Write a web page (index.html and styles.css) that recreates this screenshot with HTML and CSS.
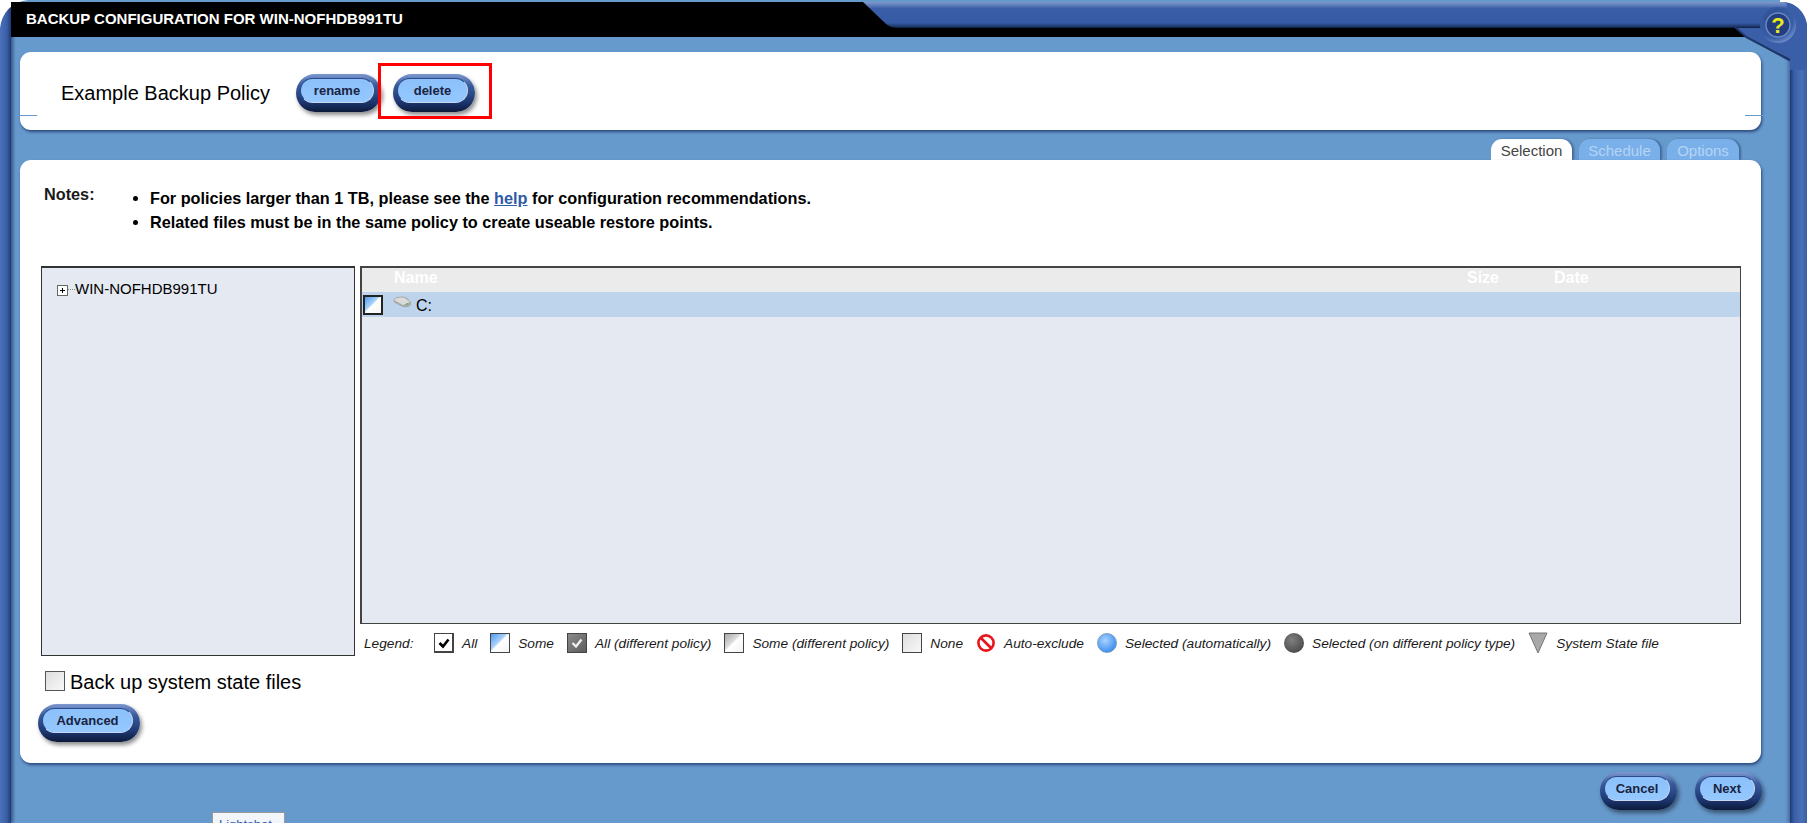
FILE: index.html
```html
<!DOCTYPE html>
<html lang="en">
<head>
    <meta charset="UTF-8">
    <title>Backup Configuration</title>
    <link rel="stylesheet" href="styles.css">
</head>
<body>

    <div class="window">
        <div class="frame-left"></div>

        <div class="main">
            <div class="titlebar">BACKUP CONFIGURATION FOR WIN-NOFHDB991TU</div>

            <!-- Policy name -->
            <div class="panel policy-panel">
                <span class="policy-name">Example Backup Policy</span>
                <a class="pill pill-rename"><span>rename</span></a>
                <a class="pill pill-delete"><span>delete</span></a>
                <div class="highlight"></div>
            </div>

            <div class="tabs">
                <div class="tab tab-active">Selection</div>
                <div class="tab tab-schedule">Schedule</div>
                <div class="tab tab-options">Options</div>
            </div>

            <!-- Selection tab -->
            <div class="panel selection-panel">
                <div class="notes">
                    <div class="notes-label">Notes:</div>
                    <ul class="notes-list">
                        <li>For policies larger than 1 TB, please see the <a class="help-link">help</a> for configuration recommendations.</li>
                        <li>Related files must be in the same policy to create useable restore points.</li>
                    </ul>
                </div>

                <div class="browser">
                    <div class="tree">
                        <span class="tree-plus"></span><span class="tree-dots"></span><span>WIN-NOFHDB991TU</span>
                    </div>

                    <div class="file-column">
                        <div class="file-grid">
                            <div class="grid-head">
                                <span class="col-name">Name</span>
                                <span class="col-size">Size</span>
                                <span class="col-date">Date</span>
                            </div>
                            <div class="grid-row">
                                <span class="check check-some check-row"></span>
                                <svg class="drive" width="20" height="15" viewBox="0 0 20 15">
                                    <path d="M2 4 C5 1 12 1 15 3 L19 7 V9 C19 11 15 13 11 12 L3 8 C1 7 1 5 2 4 Z" fill="#a9a9a9"/>
                                    <path d="M2 5 C5 2 12 2 14 4 L18 7 L11 10 Z" fill="#dadada"/>
                                    <circle cx="15" cy="9" r="0.9" fill="#5fb75f"/>
                                </svg>
                                <span class="drive-label">C:</span>
                            </div>
                        </div>

                        <div class="legend">
                            <span class="legend-title">Legend:</span>
                            <span class="legend-item item-all"><span class="check check-all"><svg width="14" height="14" viewBox="0 0 14 14"><path d="M2.5 7 L6 10.5 L11.5 3.5" fill="none" stroke="#000" stroke-width="2.6"/></svg></span>All</span>
                            <span class="legend-item item-some"><span class="check check-some"></span>Some</span>
                            <span class="legend-item item-alldiff"><span class="check check-alldiff"><svg width="14" height="14" viewBox="0 0 14 14"><path d="M2.5 7 L6 10.5 L11.5 3.5" fill="none" stroke="#eee" stroke-width="2.4"/></svg></span>All (different policy)</span>
                            <span class="legend-item item-somediff"><span class="check check-somediff"></span>Some (different policy)</span>
                            <span class="legend-item item-none"><span class="check check-none"></span>None</span>
                            <span class="legend-item item-auto">
                                <svg class="legend-icon" width="20" height="20" viewBox="0 0 20 20"><circle cx="10" cy="10" r="7.6" fill="#fff" stroke="#e8141c" stroke-width="2.6"/><path d="M5 5 L15 15" stroke="#e8141c" stroke-width="2.6"/></svg>
                                Auto-exclude</span>
                            <span class="legend-item item-selected"><span class="dot dot-blue"></span>Selected (automatically)</span>
                            <span class="legend-item item-other"><span class="dot dot-grey"></span>Selected (on different policy type)</span>
                            <span class="legend-item">
                                <svg class="legend-icon" width="20" height="22" viewBox="0 0 20 22"><path d="M1 1 H19 L10 21 Z" fill="#a8a8a8" stroke="#777" stroke-width="1"/></svg>
                                System State file</span>
                        </div>
                    </div>
                </div>

                <div class="system-state">
                    <span class="check check-none check-large"></span>
                    <span>Back up system state files</span>
                </div>

                <a class="pill pill-advanced"><span>Advanced</span></a>
            </div>

            <div class="footer">
                <a class="pill pill-cancel"><span>Cancel</span></a>
                <a class="pill pill-next"><span>Next</span></a>
            </div>
        </div>

        <div class="frame-right"></div>
    </div>

    <!-- Frame corners and the band across the top right -->
    <svg class="frame-top" width="1807" height="70" viewBox="0 0 1807 70">
        <defs>
            <linearGradient id="bandFill" x1="0" y1="0" x2="0" y2="1">
                <stop offset="0" stop-color="#8198c9"/>
                <stop offset="0.12" stop-color="#5f7fbb"/>
                <stop offset="0.25" stop-color="#3a5fa8"/>
                <stop offset="0.8" stop-color="#365ba4"/>
                <stop offset="0.95" stop-color="#1d3567"/>
                <stop offset="1" stop-color="#0c1a38"/>
            </linearGradient>
            <radialGradient id="helpRing" cx="0.4" cy="0.35" r="0.75">
                <stop offset="0" stop-color="#2a4a8c"/>
                <stop offset="0.7" stop-color="#3a5fa8"/>
                <stop offset="1" stop-color="#8aa4d8"/>
            </radialGradient>
        </defs>
        <path d="M0 0 H28 C12 2 2 12 0 28 Z" fill="#fff"/>
        <path d="M11 2 H28 C18 4 12 12 11 20 Z" fill="#000"/>
        <path d="M1780 0 H1807 V24 C1805 12 1796 3 1780 2 Z" fill="#fff"/>
        <path d="M1735 28 L1746 37 L1790 62 L1790 70 L1807 70 V26 C1805 12 1796 2 1782 2 Z" fill="#3a5fa8"/>
        <path d="M863 2 H1782 C1788 2 1790 4 1780 28 H900 C892 28 888 26 884 22 Z" fill="url(#bandFill)"/>
        <path d="M1735 27 L1746 37 L1790 60" fill="none" stroke="#1d3567" stroke-width="2"/>
        <circle cx="1778" cy="25" r="18" fill="url(#helpRing)"/>
        <circle cx="1778" cy="25" r="12" fill="#223e80" stroke="#6a88c2" stroke-width="1.5"/>
        <text x="1778" y="33" text-anchor="middle" class="help-mark">?</text>
    </svg>

    <div class="tooltip">Lightshot</div>

</body>
</html>
```

FILE: styles.css
```css
:root {
    --frame-blue: #3a5fa8;
    --page-blue: #6699cc;
    --pane-color: #e5e9f2;
    --pill-color: #90c4fb;
    --text-color: #000000;
}

html, body {
    margin: 0;
    height: 823px;
    overflow: hidden;
}

body {
    position: relative;
    background: var(--page-blue);
    font-family: "Liberation Sans", Arial, sans-serif;
    color: var(--text-color);
}

.window {
    display: flex;
    height: 823px;
}

/* Frame */
.frame-left {
    width: 11px;
    flex: none;
    background: linear-gradient(90deg, #4a72b8 0%, #3a5fa8 60%, #1f3a75 100%);
    box-shadow: 2px 0 3px rgba(20, 40, 80, 0.6);
}

.frame-right {
    width: 17px;
    flex: none;
    background: linear-gradient(90deg, #1f3a75 0%, #3a5fa8 25%, #4a70b6 70%, #3a5fa8 100%);
    box-shadow: -2px 0 3px rgba(20, 40, 80, 0.4);
}

.frame-top {
    position: absolute;
    left: 0;
    top: 0;
}

.help-mark {
    font-family: "Liberation Sans", Arial, sans-serif;
    font-size: 22px;
    font-weight: 700;
    fill: #e8e81c;
}

.main {
    flex: 1;
    min-width: 0;
    display: flex;
    flex-direction: column;
}

.titlebar {
    height: 35px;
    margin-top: 2px;
    padding-left: 15px;
    background: #000000;
    color: #ffffff;
    font-size: 15px;
    font-weight: 700;
    line-height: 33px;
}

/* Panels */
.panel {
    background: #ffffff;
    margin: 0 29px 0 9px;
    border-radius: 11px;
    box-shadow: 1px 2px 3px #2c4a7c;
    position: relative;
}

.policy-panel {
    height: 78px;
    margin-top: 15px;
    display: flex;
    align-items: center;
    box-sizing: border-box;
    padding: 4px 0 0 41px;
}

.policy-panel::before,
.policy-panel::after {
    content: "";
    position: absolute;
    top: 63px;
    height: 1px;
    background: var(--page-blue);
}

.policy-panel::before {
    left: 0;
    width: 17px;
}

.policy-panel::after {
    right: -5px;
    width: 21px;
}

.policy-name {
    font-size: 20px;
    margin-right: 26px;
}

/* Pill buttons */
.pill {
    display: inline-block;
    box-sizing: border-box;
    height: 38px;
    padding: 4px 7px 9px 4px;
    border-radius: 19px;
    background: linear-gradient(180deg, #7d98d0 0%, #3a5c9c 30%, #1f3a75 70%, #0c1a3c 100%);
    box-shadow: 2px 3px 4px rgba(0, 0, 0, 0.45);
}

.pill span {
    display: flex;
    align-items: center;
    justify-content: center;
    height: 100%;
    box-sizing: border-box;
    border-radius: 14px;
    background: linear-gradient(180deg, #8cc0fa 0%, #94c8ff 100%);
    border: 1px solid #c8d8f0;
    border-top-color: #2b4b8c;
    border-left-color: #2b4b8c;
    color: #1a2340;
    font-size: 13px;
    font-weight: 700;
}

.pill-rename {
    width: 85px;
}

.pill-delete {
    width: 82px;
    margin-left: 12px;
}

.pill-advanced {
    width: 102px;
}

.pill-cancel {
    width: 77px;
}

.pill-next {
    width: 67px;
    margin-left: 18px;
}

.highlight {
    position: absolute;
    left: 358px;
    top: 11px;
    width: 114px;
    height: 56px;
    box-sizing: border-box;
    border: 3px solid #ff0000;
}

/* Tabs */
.tabs {
    display: flex;
    justify-content: flex-end;
    gap: 7px;
    margin: 9px 51px 0 0;
    height: 21px;
}

.tab {
    width: 81px;
    height: 21px;
    text-align: center;
    border-radius: 11px 11px 0 0;
    background: #7ab0ea;
    color: #b5d4f5;
    font-size: 15px;
    line-height: 24px;
    box-shadow: 2px 0 2px rgba(30, 60, 110, 0.5);
}

.tab-options {
    width: 72px;
}

.tab-active {
    background: #ffffff;
    color: #444444;
}

/* Selection panel */
.selection-panel {
    height: 603px;
    box-sizing: border-box;
    padding: 0 20px 0 21px;
}

.notes {
    display: flex;
    height: 106px;
    box-sizing: border-box;
    padding: 25px 0 0 3px;
    font-size: 16.25px;
    font-weight: 700;
}

.notes-label {
    width: 70px;
    color: #1a1a1a;
}

.notes-list {
    margin: 3px 0 0;
    padding: 0 0 0 36px;
}

.notes-list li {
    height: 24px;
    line-height: 20px;
}

.help-link {
    color: #2f5aa8;
    text-decoration: underline;
}

.browser {
    display: flex;
    gap: 5px;
    height: 390px;
}

.tree {
    width: 314px;
    height: 390px;
    flex: none;
    box-sizing: border-box;
    padding: 12px 0 0 15px;
    display: flex;
    align-items: flex-start;
    background: var(--pane-color);
    border: 1px solid #333333;
    border-top-width: 2px;
    font-size: 15px;
}

.tree-plus {
    width: 9px;
    height: 9px;
    margin-top: 5px;
    border: 1px solid #666666;
    background:
        linear-gradient(#000, #000) center / 5px 1px no-repeat,
        linear-gradient(#000, #000) center / 1px 5px no-repeat,
        #ffffff;
}

.tree-dots {
    width: 7px;
    margin-top: 9px;
    border-top: 1px dotted #888888;
}

.file-column {
    flex: 1;
    min-width: 0;
}

.file-grid {
    height: 358px;
    box-sizing: border-box;
    background: var(--pane-color);
    border: 2px solid #444444;
    border-bottom-width: 1px;
    border-right-width: 1px;
}

.grid-head {
    display: flex;
    height: 24px;
    background: #ebebeb;
    color: #ffffff;
    font-size: 16px;
    font-weight: 700;
    line-height: 20px;
}

.col-name {
    width: 1105px;
    padding-left: 32px;
    box-sizing: border-box;
}

.col-size {
    width: 87px;
}

.grid-row {
    display: flex;
    align-items: center;
    height: 25px;
    background: #bdd4ec;
    font-size: 16px;
}

.drive {
    margin: -5px 4px 0 9px;
}

.drive-label {
    margin-top: 2px;
}

/* Checkbox states */
.check {
    display: inline-flex;
    align-items: center;
    justify-content: center;
    width: 20px;
    height: 20px;
    flex: none;
    box-sizing: border-box;
    border: 1px solid #444444;
    background: #ffffff;
}

.check-all {
    border-width: 1px 2px 2px 1px;
}

.check-some {
    background: linear-gradient(135deg, #4d9bf0 0%, #a8d0fa 42%, #ffffff 50%, #f4f4f4 100%);
}

.check-alldiff {
    background: linear-gradient(135deg, #8a8a8a, #5c5c5c);
}

.check-somediff {
    background: linear-gradient(135deg, #a8a8a8 0%, #dcdcdc 42%, #ffffff 50%, #f2f2f2 100%);
}

.check-none {
    background: linear-gradient(135deg, #dedede 0%, #f8f8f8 100%);
}

.check-row {
    margin-left: 1px;
    border-width: 2px;
    border-color: #222222;
}

.check-large {
    border-color: #555555;
}

/* Legend */
.legend {
    display: flex;
    align-items: center;
    height: 38px;
    padding-left: 4px;
    font-size: 13.7px;
    font-style: italic;
    color: #1a1a1a;
}

.legend-title {
    width: 70px;
    flex: none;
}

.legend-item {
    display: inline-flex;
    align-items: center;
    gap: 8px;
    margin-right: 13px;
    white-space: nowrap;
}

.legend-icon {
    flex: none;
}

.dot {
    width: 20px;
    height: 20px;
    flex: none;
    border-radius: 50%;
}

.dot-blue {
    background: radial-gradient(circle at 40% 35%, #a8d4ff, #3f8ff0 75%);
    border: 1px solid #7d9cc0;
    box-sizing: border-box;
}

.dot-grey {
    background: radial-gradient(circle at 40% 35%, #808080, #4c4c4c 75%);
}

/* Bottom of the selection panel */
.system-state {
    display: flex;
    align-items: center;
    gap: 5px;
    height: 32px;
    margin: 10px 0 6px 4px;
    font-size: 20px;
}

.system-state .check {
    margin-bottom: 3px;
}

.selection-panel .pill-advanced {
    margin-left: -3px;
}

.footer {
    display: flex;
    justify-content: flex-end;
    margin: 9px 28px 0 0;
}

.tooltip {
    position: absolute;
    left: 212px;
    top: 812px;
    width: 73px;
    height: 24px;
    box-sizing: border-box;
    border: 1px solid #999999;
    background: #f2f5fa;
    color: #2f5aa8;
    font-size: 13px;
    padding-left: 6px;
    line-height: 24px;
}
```
